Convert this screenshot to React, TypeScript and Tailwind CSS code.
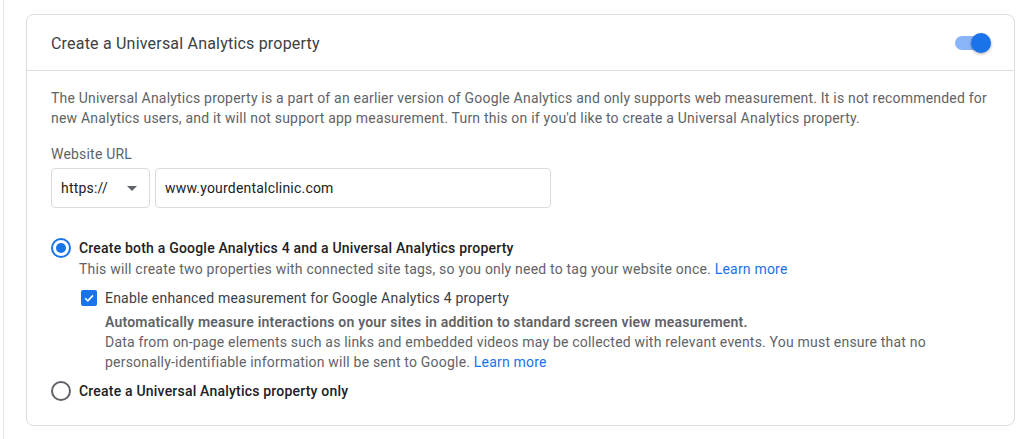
export default function App() {
  return (
    <div className="h-[439px] bg-white pl-[3px] font-['Roboto','Liberation_Sans',sans-serif] tracking-[0.2px]">
      <div className="h-full border-l border-[#e3e3e3] pl-[22px] pt-[14px]">
        <div className="w-[989px] rounded-lg border border-[#dadce0] bg-white">
          {/* Header */}
          <div className="flex h-[56px] items-center justify-between border-b border-[#dadce0] pl-[24px] pr-[23px]">
            <h2 className="pt-[2px] text-[16px] text-[#3c4043]">Create a Universal Analytics property</h2>
            <div className="relative h-[20px] w-[36px]">
              <div className="absolute left-0 top-[3px] h-[14px] w-[34px] rounded-full bg-[#8ab4f8]" />
              <div className="absolute right-0 top-0 h-[20px] w-[20px] rounded-full bg-[#1a73e8] shadow-[0_1px_3px_rgba(0,0,0,0.35)]" />
            </div>
          </div>

          {/* Body */}
          <div className="px-[24px] pb-[24px] pt-[17px] text-[14px] leading-[20px] text-[#5f6368]">
            <p>
              The Universal Analytics property is a part of an earlier version of Google Analytics and only supports web measurement. It is not recommended for
              <br />
              new Analytics users, and it will not support app measurement. Turn this on if you'd like to create a Universal Analytics property.
            </p>

            <div className="mt-[16px]">Website URL</div>
            <div className="mt-[4px] flex gap-[5px]">
              <div className="flex h-[40px] w-[99px] items-center justify-between rounded border border-[#dadce0] pl-[9px] pr-[12px] text-[#202124]">
                <span>https://</span>
                <svg width="10" height="5" viewBox="0 0 10 5">
                  <path d="M0 0 L10 0 L5 5 Z" fill="#5f6368" />
                </svg>
              </div>
              <div className="flex h-[40px] w-[396px] items-center rounded border border-[#dadce0] px-[9px] text-[#202124]">
                www.yourdentalclinic.com
              </div>
            </div>

            {/* Option 1 */}
            <div className="mt-[30px] flex items-center gap-[8px]">
              <span className="flex h-[20px] w-[20px] items-center justify-center rounded-full border-2 border-[#1a73e8]">
                <span className="h-[10px] w-[10px] rounded-full bg-[#1a73e8]" />
              </span>
              <span className="font-medium text-[#202124]">
                Create both a Google Analytics 4 and a Universal Analytics property
              </span>
            </div>
            <div className="ml-[28px] mt-[1px]">
              This will create two properties with connected site tags, so you only need to tag your website once.{" "}
              <a className="text-[#1a73e8]">Learn more</a>
            </div>

            <div className="ml-[30px] mt-[9px] flex items-center gap-[8px]">
              <span className="flex h-[16px] w-[16px] items-center justify-center rounded-[2px] bg-[#1a73e8]">
                <svg width="12" height="12" viewBox="0 0 12 12">
                  <path d="M2.2 6.2 L4.8 8.8 L10 3.4" fill="none" stroke="#fff" strokeWidth="1.6" />
                </svg>
              </span>
              <span className="text-[#3c4043]">Enable enhanced measurement for Google Analytics 4 property</span>
            </div>
            <div className="ml-[54px] mt-[4px]">
              <div className="font-semibold">
                Automatically measure interactions on your sites in addition to standard screen view measurement.
              </div>
              <div>
                Data from on-page elements such as links and embedded videos may be collected with relevant events. You must ensure that no
                <br />
                personally-identifiable information will be sent to Google.{" "}
                <a className="text-[#1a73e8]">Learn more</a>
              </div>
            </div>

            {/* Option 2 */}
            <div className="mt-[9px] flex items-center gap-[8px]">
              <span className="h-[20px] w-[20px] rounded-full border-2 border-[#5f6368]" />
              <span className="font-medium text-[#202124]">Create a Universal Analytics property only</span>
            </div>
          </div>
        </div>
      </div>
    </div>
  );
}
